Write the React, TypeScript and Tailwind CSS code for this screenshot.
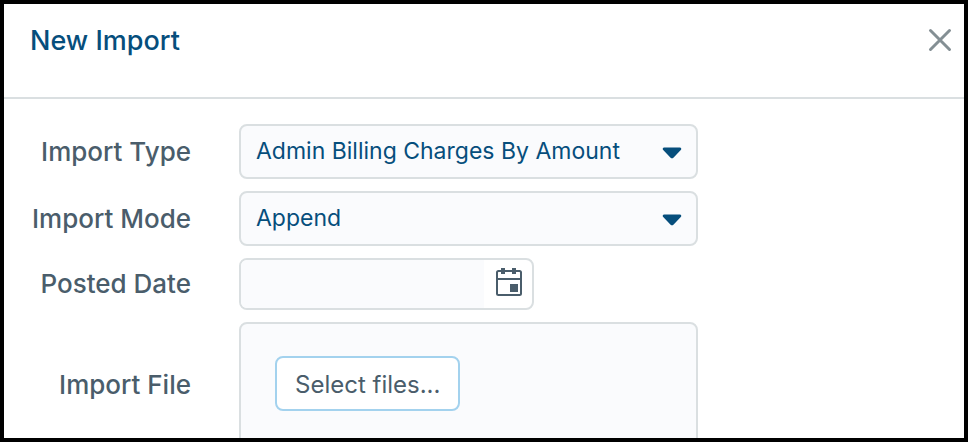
import { useRef } from "react";
import type { ReactNode } from "react";

const importTypes = ["Admin Billing Charges By Amount", "Admin Billing Charges By Rate"];
const importModes = ["Append", "Replace"];

function SelectField({ id, options }: { id: string; options: string[] }) {
  return (
    <div className="relative w-full max-w-[459px]">
      <select
        id={id}
        className="block h-[55px] w-full appearance-none rounded-lg border-2 border-[#dadfe1] bg-[#fafbfd] pr-14 pl-[15px] text-[23px] text-[#064e7c]"
      >
        {options.map((option) => (
          <option key={option}>{option}</option>
        ))}
      </select>
      <svg
        viewBox="0 0 20 12"
        className="pointer-events-none absolute top-[23px] right-4 h-3 w-5"
        aria-hidden="true"
      >
        <path
          d="M2.2 0.5H17.8C19.3 0.5 19.8 2 18.8 3L11.4 10.7C10.6 11.5 9.4 11.5 8.6 10.7L1.2 3C0.2 2 0.7 0.5 2.2 0.5Z"
          fill="#064e7c"
        />
      </svg>
    </div>
  );
}

function Row({ id, label, children }: { id: string; label: string; children: ReactNode }) {
  return (
    <div className="flex items-center gap-12">
      <label
        htmlFor={id}
        className="w-[187px] shrink-0 text-right text-[26px] leading-8 font-medium text-[#4a5d6b]"
      >
        {label}
      </label>
      <div className="min-w-0 flex-1">{children}</div>
    </div>
  );
}

function CalendarIcon() {
  return (
    <svg viewBox="0 0 28 30" className="h-[30px] w-7" fill="none" aria-hidden="true">
      <rect x="2" y="4" width="24" height="24" rx="1.5" stroke="#4a5d6b" strokeWidth="2" />
      <path d="M2 12H26" stroke="#4a5d6b" strokeWidth="2" />
      <rect x="6" y="1" width="4" height="6" fill="#4a5d6b" />
      <rect x="17" y="1" width="4" height="6" fill="#4a5d6b" />
      <rect x="15" y="17" width="8" height="8" fill="#4a5d6b" />
    </svg>
  );
}

export default function App() {
  const fileInput = useRef<HTMLInputElement>(null);

  return (
    <div className="flex h-screen flex-col overflow-hidden border-4 border-black bg-white font-['Inter',sans-serif]">
      <header className="flex items-start justify-between border-b-2 border-[#dadfe1] pt-5 pr-3 pb-10 pl-[26px]">
        <h1 className="text-[27px] leading-[33px] font-medium text-[#064e7c]">New Import</h1>
        <button type="button" aria-label="Close" className="pt-1">
          <svg viewBox="0 0 24 24" className="size-6" fill="none" aria-hidden="true">
            <path
              d="M2.5 2.5L21.5 21.5M21.5 2.5L2.5 21.5"
              stroke="#848f94"
              strokeWidth="3"
              strokeLinecap="round"
            />
          </svg>
        </button>
      </header>

      <form className="flex flex-col gap-3 pt-[25px] pr-6">
        <Row id="import-type" label="Import Type">
          <SelectField id="import-type" options={importTypes} />
        </Row>
        <Row id="import-mode" label="Import Mode">
          <SelectField id="import-mode" options={importModes} />
        </Row>
        <Row id="posted-date" label="Posted Date">
          <div className="flex h-[52px] w-full max-w-[295px] overflow-hidden rounded-lg border-2 border-[#dadfe1]">
            <input
              id="posted-date"
              type="text"
              className="min-w-0 flex-1 bg-[#fafbfd] px-4 text-[23px] text-[#064e7c]"
            />
            <button
              type="button"
              aria-label="Open calendar"
              className="flex w-12 shrink-0 items-center justify-center pb-1 pl-0.5"
            >
              <CalendarIcon />
            </button>
          </div>
        </Row>
        <Row id="import-file" label="Import File">
          <div className="w-full max-w-[459px] rounded-lg border-2 border-[#dadfe1] bg-[#fafbfd] px-[34px] pt-8 pb-[34px]">
            <input ref={fileInput} id="import-file" type="file" className="hidden" />
            <button
              type="button"
              onClick={() => fileInput.current?.click()}
              className="block h-[55px] rounded-lg border-2 border-[#a3d2ee] bg-white px-[18px] pt-0.5 text-2xl text-[#4a5d6b]"
            >
              Select files...
            </button>
          </div>
        </Row>
      </form>
    </div>
  );
}
